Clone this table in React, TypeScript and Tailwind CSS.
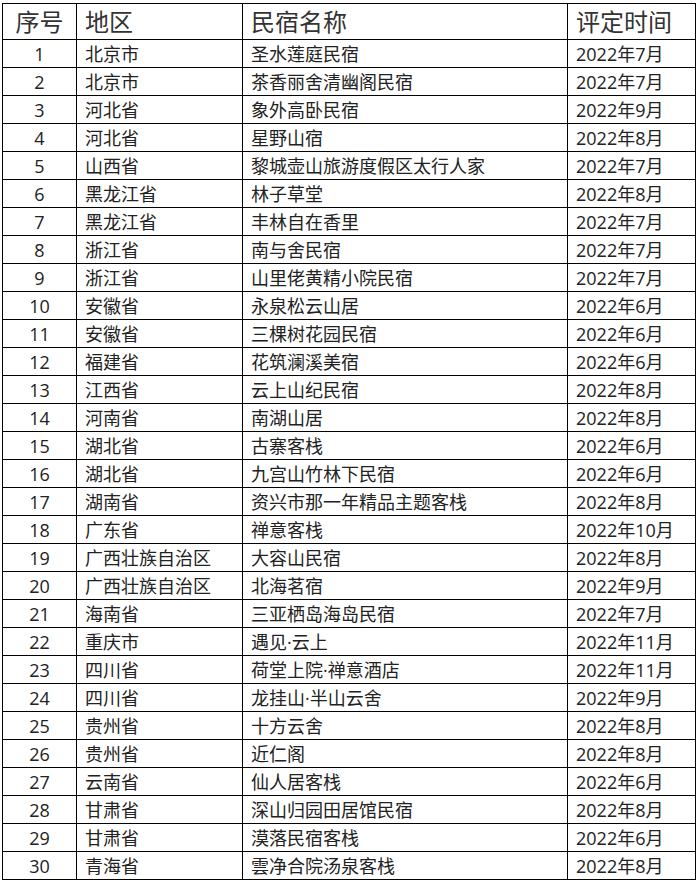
import React from "react";

const rows: [string, string, string][] = [
  ["北京市", "圣水莲庭民宿", "2022年7月"],
  ["北京市", "茶香丽舍清幽阁民宿", "2022年7月"],
  ["河北省", "象外高卧民宿", "2022年9月"],
  ["河北省", "星野山宿", "2022年8月"],
  ["山西省", "黎城壶山旅游度假区太行人家", "2022年7月"],
  ["黑龙江省", "林子草堂", "2022年8月"],
  ["黑龙江省", "丰林自在香里", "2022年7月"],
  ["浙江省", "南与舍民宿", "2022年7月"],
  ["浙江省", "山里佬黄精小院民宿", "2022年7月"],
  ["安徽省", "永泉松云山居", "2022年6月"],
  ["安徽省", "三棵树花园民宿", "2022年6月"],
  ["福建省", "花筑澜溪美宿", "2022年6月"],
  ["江西省", "云上山纪民宿", "2022年8月"],
  ["河南省", "南湖山居", "2022年8月"],
  ["湖北省", "古寨客栈", "2022年6月"],
  ["湖北省", "九宫山竹林下民宿", "2022年6月"],
  ["湖南省", "资兴市那一年精品主题客栈", "2022年8月"],
  ["广东省", "禅意客栈", "2022年10月"],
  ["广西壮族自治区", "大容山民宿", "2022年8月"],
  ["广西壮族自治区", "北海茗宿", "2022年9月"],
  ["海南省", "三亚栖岛海岛民宿", "2022年7月"],
  ["重庆市", "遇见·云上", "2022年11月"],
  ["四川省", "荷堂上院·禅意酒店", "2022年11月"],
  ["四川省", "龙挂山·半山云舍", "2022年9月"],
  ["贵州省", "十方云舍", "2022年8月"],
  ["贵州省", "近仁阁", "2022年8月"],
  ["云南省", "仙人居客栈", "2022年6月"],
  ["甘肃省", "深山归园田居馆民宿", "2022年8月"],
  ["甘肃省", "漠落民宿客栈", "2022年6月"],
  ["青海省", "雲净合院汤泉客栈", "2022年8月"],
];

const cell = "border border-black px-2 whitespace-nowrap";

export default function App() {
  return (
    <div className="w-[699px] h-[883px] bg-white pl-[2px] pt-[3px] font-['Open_Sans','Noto_Sans_CJK_SC',sans-serif] text-[#222]">
      <table className="border-collapse table-fixed w-[693px]">
        <colgroup>
          <col className="w-[74px]" />
          <col className="w-[166px]" />
          <col className="w-[325px]" />
          <col className="w-[128px]" />
        </colgroup>
        <thead>
          <tr className="h-[36px] text-[24px] leading-none text-[#333]">
            <th className="border border-black text-center font-normal">序号</th>
            <th className={`${cell} text-left font-normal`}>地区</th>
            <th className={`${cell} text-left font-normal`}>民宿名称</th>
            <th className={`${cell} text-left font-normal`}>评定时间</th>
          </tr>
        </thead>
        <tbody>
          {rows.map((r, idx) => (
            <tr key={idx} className="h-[28px] text-[18px] leading-none">
              <td className="border border-black text-center p-0">{idx + 1}</td>
              <td className={cell}>{r[0]}</td>
              <td className={cell}>{r[1]}</td>
              <td className={cell}>{r[2]}</td>
            </tr>
          ))}
        </tbody>
      </table>
    </div>
  );
}
